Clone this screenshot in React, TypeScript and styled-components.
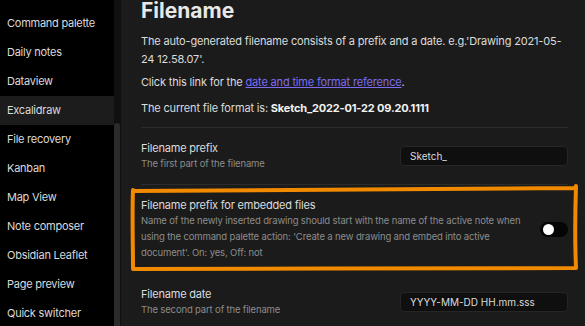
import styled, { createGlobalStyle } from "styled-components";

const GlobalStyle = createGlobalStyle`
  html, body {
    margin: 0;
    padding: 0;
    background: #1b1b1b;
    overflow: hidden;
  }
  * {
    box-sizing: border-box;
  }
`;

const pluginList = [
  "Command palette",
  "Daily notes",
  "Dataview",
  "Excalidraw",
  "File recovery",
  "Kanban",
  "Map View",
  "Note composer",
  "Obsidian Leaflet",
  "Page preview",
  "Quick switcher",
];

const App = () => {
  return (
    <>
      <GlobalStyle />
      <Screen>
        <Sidebar>
          <NavList>
            {pluginList.map((name) => (
              <NavItem key={name} $active={name === "Excalidraw"}>
                {name}
              </NavItem>
            ))}
          </NavList>
          <ScrollTrack>
            <ScrollThumb />
          </ScrollTrack>
        </Sidebar>

        <Content>
          <Heading>Filename</Heading>
          <Para>
            The auto-generated filename consists of a prefix and a date.
            e.g.'Drawing 2021-05-24 12.58.07'.
          </Para>
          <Para $gap={5}>
            Click this link for the <Link>date and time format reference</Link>.
          </Para>
          <Para $gap={8}>
            The current file format is: <b>Sketch_2022-01-22 09.20.1111</b>
          </Para>

          <SettingList>
            <SettingRow>
              <Info>
                <Name>Filename prefix</Name>
                <Desc>The first part of the filename</Desc>
              </Info>
              <TextInput defaultValue="Sketch_" />
            </SettingRow>
            <SettingRow>
              <Info>
                <Name>Filename prefix for embedded files</Name>
                <Desc>
                  Name of the newly inserted drawing should start with the name
                  of the active note when using the command palette action:
                  'Create a new drawing and embed into active document'. On:
                  yes, Off: not
                </Desc>
              </Info>
              <Toggle>
                <Knob />
              </Toggle>
            </SettingRow>
            <SettingRow $noBorder>
              <Info>
                <Name>Filename date</Name>
                <Desc>The second part of the filename</Desc>
              </Info>
              <TextInput defaultValue="YYYY-MM-DD HH.mm.sss" />
            </SettingRow>
          </SettingList>
        </Content>

        <Annotation width="585" height="326" viewBox="0 0 585 326">
          <path
            d="M133 191 C 250 190, 420 189, 575 188 L 576 186 C 575 215, 575 245, 576 268 C 430 268, 280 269, 133 269 C 133 245, 132 215, 133 190"
            fill="none"
            stroke="#f28a00"
            strokeWidth="4"
            strokeLinejoin="round"
            strokeLinecap="round"
          />
        </Annotation>
      </Screen>
    </>
  );
};

export default App;

const Screen = styled.div`
  position: relative;
  display: flex;
  width: 585px;
  height: 326px;
  overflow: hidden;
  font-family: Inter, "Noto Sans", sans-serif;
  background: #1b1b1b;
`;

const Sidebar = styled.div`
  display: flex;
  flex: 0 0 121px;
  background: #000;
`;

const NavList = styled.div`
  width: 114px;
  padding-top: 9px;
  display: flex;
  flex-direction: column;
`;

const NavItem = styled.div<{ $active?: boolean }>`
  height: 29px;
  line-height: 29px;
  padding-left: 7px;
  font-size: 11px;
  letter-spacing: -0.25px;
  color: #dadada;
  white-space: nowrap;
  background: ${(p) => (p.$active ? "#1c1c1c" : "transparent")};
`;

const ScrollTrack = styled.div`
  width: 7px;
  background: #101010;
  padding-top: 123px;
`;

const ScrollThumb = styled.div`
  width: 6px;
  height: 100%;
  background: #2b2b2b;
  border-radius: 3px 3px 0 0;
`;

const Content = styled.div`
  flex: 1;
  padding: 0 17px 0 20px;
  color: #dcdcdc;
`;

const Heading = styled.h1`
  margin: -1px 0 0;
  font-size: 21px;
  line-height: 24px;
  font-weight: 700;
  color: #e8e8e8;
`;

const Para = styled.p<{ $gap?: number }>`
  margin: ${(p) => p.$gap ?? 9}px 0 0;
  font-size: 11px;
  letter-spacing: -0.17px;
  line-height: 18px;
  color: #dcdcdc;

  b {
    color: #f2f2f2;
    font-weight: 700;
  }
`;

const Link = styled.a`
  color: #7d6cf3;
  text-decoration: underline;
  cursor: pointer;
`;

const SettingList = styled.div`
  margin-top: 10px;
`;

const SettingRow = styled.div<{ $noBorder?: boolean }>`
  display: flex;
  align-items: center;
  gap: 12px;
  padding: 12px 0;
  border-top: 1px solid #2c2c2c;
  ${(p) => (p.$noBorder ? "border-top-color: transparent;" : "")}
`;

const Info = styled.div`
  flex: 1;
  min-width: 0;
`;

const Name = styled.div`
  font-size: 11px;
  letter-spacing: -0.2px;
  line-height: 16px;
  color: #dcdcdc;
`;

const Desc = styled.div`
  font-size: 9.5px;
  letter-spacing: -0.15px;
  line-height: 16px;
  color: #8c8c8c;
`;

const TextInput = styled.input`
  width: 168px;
  height: 20px;
  padding: 0 9px;
  border: 1px solid #262626;
  border-radius: 4px;
  background: #0f0f0f;
  color: #dcdcdc;
  font-family: Inter, "Noto Sans", sans-serif;
  font-size: 10px;
  outline: none;
`;

const Toggle = styled.div`
  flex: 0 0 28px;
  height: 15px;
  border-radius: 8px;
  background: #050505;
  display: flex;
  align-items: center;
  padding-left: 3px;
`;

const Knob = styled.div`
  width: 11px;
  height: 11px;
  border-radius: 50%;
  background: #fff;
`;

const Annotation = styled.svg`
  position: absolute;
  left: 0;
  top: 0;
  pointer-events: none;
`;
